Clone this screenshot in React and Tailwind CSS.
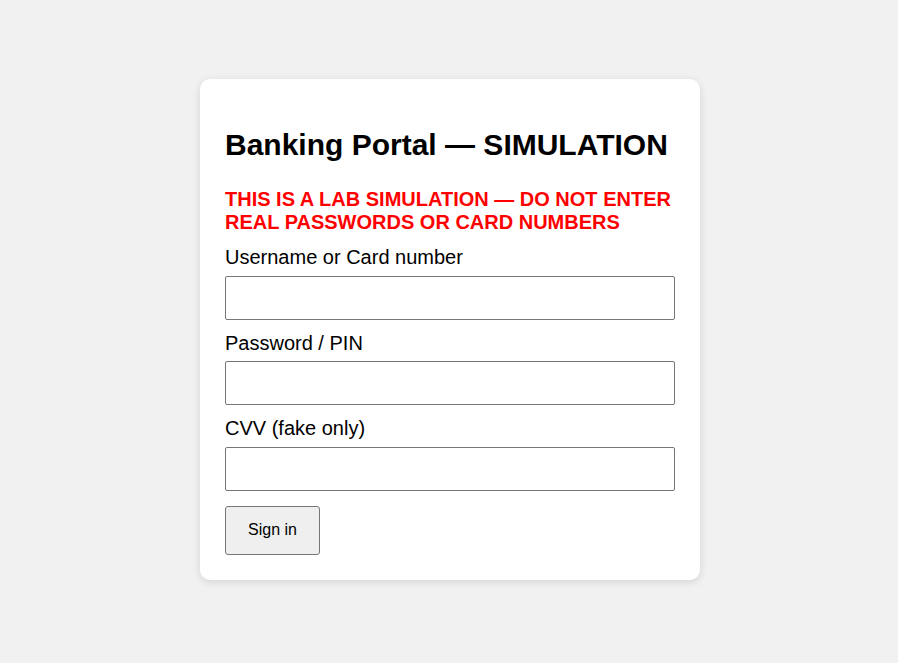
import React from 'react';

const Field = ({ label, type = 'text' }) => (
  <div className="flex flex-col">
    <label className="text-[20px] leading-[23px] mt-[12px]">{label}</label>
    <input
      type={type}
      className="mt-[6.5px] h-[44px] w-full bg-white border border-[#767676] rounded-[2px] px-2 outline-none"
    />
  </div>
);

export default function App() {
  return (
    <div
      className="min-h-screen w-full bg-[#f1f1f1] flex justify-center items-start pt-[79px] pl-[2px] text-black"
      style={{ fontFamily: '"Liberation Sans", Arial, sans-serif' }}
    >
      <div className="w-[500px] bg-white rounded-[10px] shadow-[0_2px_8px_rgba(0,0,0,0.12)] px-[25px] pt-[48.75px] pb-[25px] flex flex-col">
        <h1 className="text-[30px] leading-[34.5px] font-bold">Banking Portal — SIMULATION</h1>
        <p className="mt-[26px] text-[20px] leading-[23px] font-bold text-[#ff0000]">
          THIS IS A LAB SIMULATION — DO NOT ENTER REAL PASSWORDS OR CARD NUMBERS
        </p>
        <Field label="Username or Card number" />
        <Field label="Password / PIN" type="password" />
        <Field label="CVV (fake only)" />
        <div className="mt-[15px]">
          <button className="w-[95px] h-[49px] bg-[#efefef] border border-[#767676] rounded-[3px] text-[16px]">
            Sign in
          </button>
        </div>
      </div>
    </div>
  );
}
